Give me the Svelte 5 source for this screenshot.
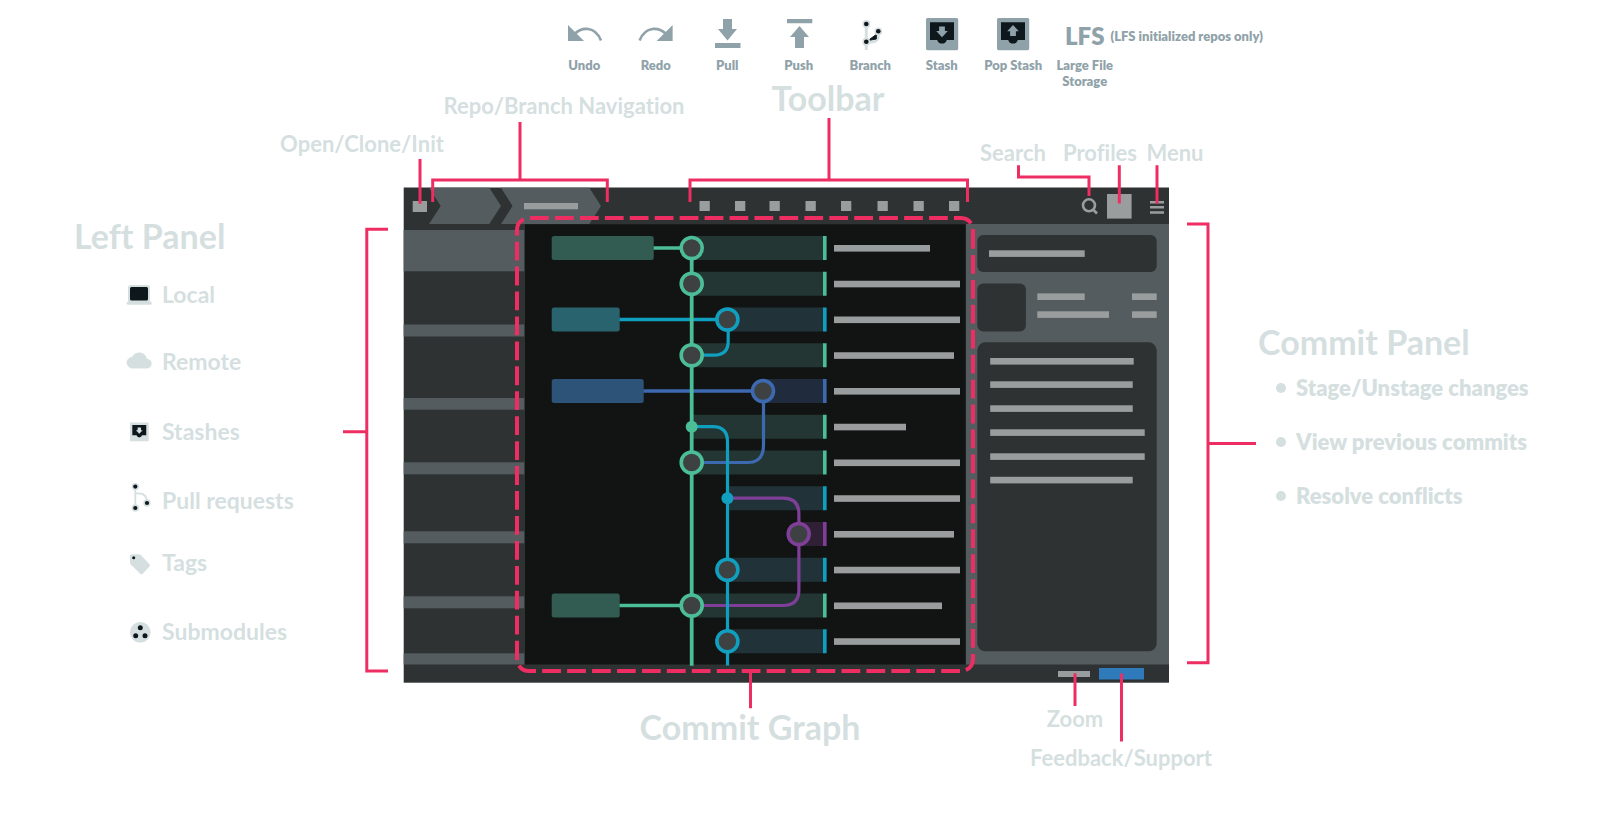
<script>
  const tools = ['Undo', 'Redo', 'Pull', 'Push', 'Branch', 'Stash', 'Pop Stash'];
  const panelItems = ['Local', 'Remote', 'Stashes', 'Pull requests', 'Tags', 'Submodules'];
  const commitItems = ['Stage/Unstage changes', 'View previous commits', 'Resolve conflicts'];

  const palette = {
    green: { line: '#4bbd97', band: '#233633', fill: '#325c52' },
    blue: { line: '#119fc0', band: '#213338', fill: '#29646e' },
    indigo: { line: '#3c69b0', band: '#202b3d', fill: '#2d5378' },
    purple: { line: '#7f3f98', band: '#2f2036', fill: '#2f2036' }
  };
  const laneX = { green: 691.7, blue: 727.4, indigo: 763, purple: 798.7 };

  // lane, width of the message bar, width of the branch tag, merge point or full commit
  const commits = [
    { lane: 'green', message: 96, tag: 102 },
    { lane: 'green', message: 126 },
    { lane: 'blue', message: 126, tag: 68 },
    { lane: 'green', message: 120 },
    { lane: 'indigo', message: 126, tag: 92 },
    { lane: 'green', message: 72, small: true },
    { lane: 'green', message: 126 },
    { lane: 'blue', message: 126, small: true },
    { lane: 'purple', message: 120 },
    { lane: 'blue', message: 126 },
    { lane: 'green', message: 108, tag: 68 },
    { lane: 'blue', message: 126 }
  ].map((c, i) => ({ ...c, x: laneX[c.lane], y: 248 + 35.75 * i, ...palette[c.lane] }));

  const toolSquares = [699.5, 735, 769.5, 805.5, 841, 877.5, 913.5, 949];
  const sections = [[230, 41.3], [324.5, 12], [398, 11.7], [462.3, 12], [531.3, 12], [596.3, 12], [653.3, 11.2]];
  const fileLines = [[358, 143.5], [381.3, 142.5], [405.3, 142.5], [429.3, 154.5], [453.3, 154.5], [476.8, 142.5]];

  const labels = [
    { text: 'Repo/Branch Navigation', x: 564, y: 114 },
    { text: 'Open/Clone/Init', x: 362, y: 152 },
    { text: 'Toolbar', x: 828, y: 111, big: true },
    { text: 'Search', x: 1013, y: 161 },
    { text: 'Profiles', x: 1100, y: 161 },
    { text: 'Menu', x: 1175, y: 161 },
    { text: 'Commit Graph', x: 750, y: 740, big: true },
    { text: 'Zoom', x: 1075, y: 727 },
    { text: 'Feedback/Support', x: 1121, y: 766 }
  ];
</script>

{#snippet stash(up)}
  <rect width="32.2" height="32.2" rx="1.6" fill="currentColor" />
  <path d="M4 4.3h24v17.6h-7.2a5 5 0 0 1-9.6 0H4z" fill="#0d171c" />
  {#if up}
    <path d="M16 7l5.8 6.2h-2.9V18h-5.8v-4.8h-2.9z" fill="currentColor" />
  {:else}
    <path d="M16 19.3l-5.8-6.3h2.9V8.6h5.8V13h2.9z" fill="currentColor" />
  {/if}
{/snippet}

{#snippet dot(x, y, r)}
  <circle cx={x} cy={y} r={r + 1.6} fill="#d5dfdf" />
  <circle cx={x} cy={y} {r} fill="#0d171c" />
{/snippet}

<main>
  <ul class="tools">
    {#each tools as tool}
      <li>
        <svg class="tool-icon" viewBox="0 0 36 34" aria-hidden="true">
          {#if tool === 'Undo' || tool === 'Redo'}
            <g transform={tool === 'Redo' ? 'translate(36.6 0) scale(-1 1)' : undefined}>
              <path d="M2 8V24H18z" fill="currentColor" />
              <path d="M8 17.5C16 9.500 29 9 35 23.400" fill="none" stroke="currentColor" stroke-width="2.6" />
            </g>
          {:else if tool === 'Pull'}
            <path d="M14 2h9v10h5L18.500 23.400 9 12h5zM6 26H31.500v5H6z" fill="currentColor" />
          {:else if tool === 'Push'}
            <path d="M6 2h25.300v4.300H6zM18.500 9l9.500 11h-5v11h-9V20H9z" fill="currentColor" />
          {:else if tool === 'Branch'}
            <path d="M14.300 6v27M26.300 15v3q0 7-7 7h-5" fill="none" stroke="#d5dfdf" stroke-width="3" />
            <path d="M16 23.500L24.300 17.500V22z" fill="#0d171c" stroke="#0d171c" />
            {@render dot(14.3, 7, 2.3)}
            {@render dot(14.3, 24.7, 2.3)}
            {@render dot(26.3, 14.3, 2.3)}
          {:else}
            <g transform="translate(2 1)">{@render stash(tool === 'Pop Stash')}</g>
          {/if}
        </svg>
        <span>{tool}</span>
      </li>
    {/each}
    <li>
      <div class="lfs"><strong>LFS</strong><small>(LFS initialized repos only)</small></div>
      <span>Large File Storage</span>
    </li>
  </ul>

  <div class="guide">
    <section class="left">
      <h2>Left Panel</h2>
      <ul>
        {#each panelItems as item}
          <li>
            <svg viewBox="0 0 26 30" aria-hidden="true">
              {#if item === 'Local'}
                <rect x="2" y="6" width="22" height="18" rx="3" fill="currentColor" />
                <rect x="4" y="8" width="18" height="13.600" rx="1.500" fill="#0d171c" />
                <rect x="0.700" y="22.500" width="25" height="3.300" rx="1.600" fill="currentColor" />
              {:else if item === 'Remote'}
                <path transform="translate(0.700 2.600) scale(1.040 1)" fill="currentColor" d="M19.350 10.040C18.670 6.590 15.640 4 12 4 9.110 4 6.600 5.640 5.350 8.040 2.340 8.360 0 10.910 0 14c0 3.310 2.690 6 6 6h13c2.760 0 5-2.240 5-5 0-2.640-2.050-4.780-4.650-4.960z" />
              {:else if item === 'Stashes'}
                <g transform="translate(4 6.600) scale(0.580)">{@render stash(false)}</g>
              {:else if item === 'Pull requests'}
                <path d="M9.300 2v21M9.300 8.400H13Q20.500 8.400 21 17" fill="none" stroke="currentColor" stroke-width="1.800" />
                {@render dot(9.3, 1.6, 2.1)}
                {@render dot(9.3, 23, 2.1)}
                {@render dot(21, 18, 2.1)}
              {:else if item === 'Tags'}
                <path d="M5.500 7.300h7.500q1 0 1.800.8l8.700 9.200q1 1.200 0 2.300l-6.800 7.200q-1.300 1.200-2.500 0L4.800 17.600Q4 16.800 4 15.700V9q0-1.700 1.500-1.700z" fill="currentColor" />
                <circle cx="7.700" cy="10.700" r="1.500" fill="#0d171c" />
              {:else}
                <circle cx="14.300" cy="16.300" r="10.400" fill="currentColor" />
                <circle cx="14.300" cy="11.700" r="2.500" fill="#0d171c" />
                <circle cx="9.700" cy="19.700" r="2.500" fill="#0d171c" />
                <circle cx="19" cy="19.700" r="2.500" fill="#0d171c" />
              {/if}
            </svg>
            <span>{item}</span>
          </li>
        {/each}
      </ul>
    </section>

    <svg class="figure" viewBox="300 88 956 730" role="img" aria-label="Application window with its parts labelled">
      <!-- window -->
      <rect x="403.700" y="187.500" width="765.300" height="495.200" fill="#2e3233" />
      <g fill="#545c5f">
        <path d="M429 187.700H489.300L501 206 489.300 224H429L440.700 206z" />
        <path d="M501 187.700H589.300L601 206 589.300 224H501L512.500 206z" />
        {#each sections as [y, h]}
          <rect x="403.700" {y} width="120.500" height={h} />
        {/each}
        <rect x="965.700" y="224" width="203.300" height="440.500" />
      </g>
      <rect x="525" y="224.300" width="440.700" height="440.200" fill="#111413" />

      <!-- title bar -->
      <g fill="#9a9d9e">
        <rect x="412.700" y="201" width="14.300" height="11" />
        <rect x="524" y="203" width="54" height="6.300" />
        {#each toolSquares as x}
          <rect {x} y="201" width="10.300" height="10" />
        {/each}
        <rect x="1107" y="194" width="24.600" height="24.600" />
        <path d="M1150 201h14v2.500h-14zM1150 206h14v2.600h-14zM1150 211.200h14v2.600h-14z" />
      </g>
      <g fill="none" stroke="#9a9d9e" stroke-width="2.600">
        <circle cx="1089" cy="205.300" r="6" />
        <path d="M1093 209.500L1097 213.500" />
      </g>

      <!-- commit panel -->
      <g fill="#2e3233">
        <rect x="977.300" y="235" width="179.400" height="37" rx="6" />
        <rect x="977.300" y="283.600" width="48.600" height="48" rx="6" />
        <rect x="977.300" y="342.300" width="179.400" height="309" rx="8" />
      </g>
      <g fill="#9a9d9e">
        <rect x="989" y="250.300" width="95.700" height="6.600" />
        <rect x="1037.300" y="293.400" width="47.400" height="6.600" />
        <rect x="1037.300" y="311.300" width="71.700" height="6.600" />
        <rect x="1132" y="293.400" width="24.700" height="6.600" />
        <rect x="1132" y="311.300" width="24.700" height="6.600" />
        {#each fileLines as [y, w]}
          <rect x="990.200" {y} width={w} height="6.600" />
        {/each}
        <rect x="1058" y="671" width="32" height="6" />
      </g>
      <rect x="1099" y="668" width="45" height="11.500" fill="#2f7abb" />

      <!-- commit graph -->
      {#each commits as c}
        <rect x={c.x} y={c.y - 12} width={823 - c.x} height="24" fill={c.band} />
        <rect x="823" y={c.y - 12} width="3.600" height="24" fill={c.line} />
        <rect x="834" y={c.y - 3} width={c.message} height="6.600" fill="#9a9d9e" />
        {#if c.tag}
          <path d="M{551 + c.tag} {c.y}H{c.x}" stroke={c.line} stroke-width="3.600" />
          <rect x="551.700" y={c.y - 12} width={c.tag} height="24" rx="2.500" fill={c.fill} />
        {/if}
      {/each}
      <g fill="none" stroke-width="3.200">
        <path d="M728.200 319.500V341Q728.200 355.200 714 355.200H692" stroke="#119fc0" />
        <path d="M763.500 391V445Q763.500 462.500 748 462.500H692" stroke="#3c69b0" />
        <path d="M727 498.200H783Q798.900 498.200 798.900 514V590Q798.900 605.500 783 605.500H692" stroke="#7f3f98" />
        <path d="M692 426.700H713Q727.500 426.700 727.500 442V665.500" stroke="#119fc0" />
        <path d="M691.700 248V665.700" stroke="#4bbd97" stroke-width="3.800" />
      </g>
      {#each commits as c}
        {#if c.small}
          <circle cx={c.x} cy={c.y} r="6" fill={c.line} />
        {:else}
          <circle cx={c.x} cy={c.y} r="10.500" fill="#3e4142" stroke={c.line} stroke-width="3.600" />
        {/if}
      {/each}

      <!-- callouts -->
      <g fill="none" stroke="#ee2d62">
        <g stroke-width="4" stroke-dasharray="18.800 6.140">
          <path d="M530 218H961A12 12 0 0 1 973 230" />
          <path d="M973 230V659A12 12 0 0 1 961 671" />
          <path d="M960 671H529A12 12 0 0 1 517 659" />
          <path d="M517 659.500V230A12 12 0 0 1 529 218" />
        </g>
        <g stroke-width="3">
          <path d="M420 159V203.700" />
          <path d="M520 122V180M432.700 202V180H607.300V202" />
          <path d="M829 118V180M690 202V180H967.500V202" />
          <path d="M1018.500 165.300V177H1089V196" />
          <path d="M1119.300 165.300V203.500M1157 165.300V203.500" />
          <path d="M388 229.200H366.800V671H388M343 431.800H366.800" />
          <path d="M1187 224H1208V662.700H1187M1208 443.500H1256" />
          <path d="M750.500 671V708.300M1075 673.300V706M1121.500 673.500V741.500" />
        </g>
      </g>
      {#each labels as l}
        <text class:big={l.big} x={l.x} y={l.y}>{l.text}</text>
      {/each}
    </svg>

    <section class="right">
      <h2>Commit Panel</h2>
      <ul>
        {#each commitItems as item}
          <li>{item}</li>
        {/each}
      </ul>
    </section>
  </div>
</main>

<style>
  :global(body) {
    margin: 0;
    background: #fff;
  }
  main {
    font-family: Lato, sans-serif;
    font-weight: 700;
    font-variant-ligatures: none;
    color: #d5dfdf;
    overflow: hidden;
  }
  ul {
    list-style: none;
    margin: 0;
    padding: 0;
  }
  h2 {
    margin: 0;
    font-size: 34px;
    line-height: 40px;
    font-weight: 700;
    white-space: nowrap;
  }
  .tools {
    display: grid;
    grid-template-columns: repeat(8, 1fr);
    width: 572px;
    height: 71px;
    margin: 0 auto;
    padding: 17px 0 0 68px;
    color: #90a2a9;
    font-size: 13px;
    font-weight: 800;
    line-height: 16px;
    text-align: center;
  }
  .tools li {
    display: flex;
    flex-direction: column;
    align-items: center;
    gap: 6px;
  }
  .tools li span {
    max-width: 64px;
  }
  .tool-icon {
    display: block;
    width: 36px;
    height: 34px;
    overflow: visible;
  }
  .lfs {
    display: flex;
    align-items: center;
    align-self: flex-start;
    gap: 6px;
    width: 0;
    height: 34px;
    padding: 3px 0 0 16px;
    box-sizing: border-box;
    white-space: nowrap;
  }
  .lfs strong {
    font-size: 24px;
    font-weight: 800;
  }
  .lfs small {
    font-size: 13px;
  }
  .guide {
    display: grid;
    grid-template-columns: 300fr 956fr 345fr;
    align-items: start;
  }
  .figure {
    display: block;
    width: 100%;
    overflow: visible;
  }
  .figure text {
    font-size: 22px;
    fill: #d5dfdf;
    text-anchor: middle;
  }
  .figure .big {
    font-size: 34px;
  }
  .left {
    padding: 128px 0 0 74px;
  }
  .left ul {
    display: grid;
    grid-template-rows: 67px 70px 69px 62px 69px 30px;
    padding: 23px 0 0 52px;
  }
  .left li {
    display: flex;
    gap: 10px;
    height: 30px;
    font-size: 23px;
    line-height: 30px;
    white-space: nowrap;
  }
  .left svg {
    flex: none;
    width: 26px;
    height: 30px;
    overflow: visible;
  }
  .right {
    padding: 234px 0 0 2px;
  }
  .right ul {
    display: grid;
    gap: 24px;
    padding: 11px 0 0 18px;
  }
  .right li {
    display: flex;
    align-items: center;
    gap: 10px;
    font-size: 22px;
    font-weight: 800;
    line-height: 30px;
    white-space: nowrap;
  }
  .right li::before {
    content: '';
    width: 10px;
    height: 10px;
    border-radius: 50%;
    background: #d5dfdf;
  }
</style>
